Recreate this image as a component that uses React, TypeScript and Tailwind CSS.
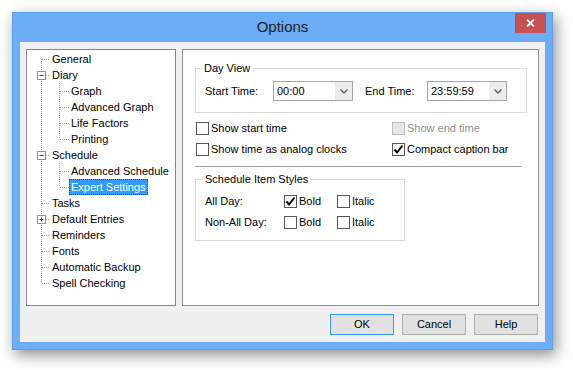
import React from "react";

type Node = {
  label: string;
  level: 0 | 1;
  box?: "-" | "+";
  lastChild?: boolean;
  selected?: boolean;
};

const tree: Node[] = [
  { label: "General", level: 0 },
  { label: "Diary", level: 0, box: "-" },
  { label: "Graph", level: 1 },
  { label: "Advanced Graph", level: 1 },
  { label: "Life Factors", level: 1 },
  { label: "Printing", level: 1, lastChild: true },
  { label: "Schedule", level: 0, box: "-" },
  { label: "Advanced Schedule", level: 1 },
  { label: "Expert Settings", level: 1, lastChild: true, selected: true },
  { label: "Tasks", level: 0 },
  { label: "Default Entries", level: 0, box: "+" },
  { label: "Reminders", level: 0 },
  { label: "Fonts", level: 0 },
  { label: "Automatic Backup", level: 0 },
  { label: "Spell Checking", level: 0 },
];

const DOT = "#a0a0a0";

function TreeLines({ node, first, last }: { node: Node; first: boolean; last: boolean }) {
  const w = node.level === 0 ? 23 : 42;
  const rootFrom = first ? 8 : 0;
  const rootTo = last ? 8.5 : 16;
  return (
    <svg width={w} height={16} className="shrink-0">
      <line x1={14.5} y1={rootFrom} x2={14.5} y2={rootTo} stroke={DOT} strokeDasharray="1 1" />
      {node.level === 0 && (
        <line x1={15} y1={8.5} x2={23} y2={8.5} stroke={DOT} strokeDasharray="1 1" />
      )}
      {node.level === 1 && (
        <>
          <line
            x1={32.5}
            y1={0}
            x2={32.5}
            y2={node.lastChild ? 8.5 : 16}
            stroke={DOT}
            strokeDasharray="1 1"
          />
          <line x1={33} y1={8.5} x2={42} y2={8.5} stroke={DOT} strokeDasharray="1 1" />
        </>
      )}
      {node.box && (
        <>
          <rect x={10.5} y={4.5} width={8} height={8} fill="#fff" stroke="#919191" />
          <line x1={12.5} y1={8.5} x2={16.5} y2={8.5} stroke="#3c3c3c" />
          {node.box === "+" && <line x1={14.5} y1={6.5} x2={14.5} y2={10.5} stroke="#3c3c3c" />}
        </>
      )}
    </svg>
  );
}

function Check({ checked, disabled, label }: { checked?: boolean; disabled?: boolean; label: string }) {
  return (
    <div className="flex h-[13px] items-center">
      <div
        className={
          disabled
            ? "flex h-[13px] w-[13px] shrink-0 items-center justify-center border border-[#bcbcbc] bg-[#e6e6e6]"
            : "flex h-[13px] w-[13px] shrink-0 items-center justify-center border border-[#555555] bg-white"
        }
      >
        {checked && (
          <svg width={11} height={11} viewBox="0 0 11 11">
            <path d="M1.5 5.5 L4 8.5 L9.5 1.5" fill="none" stroke="#000" strokeWidth={2} />
          </svg>
        )}
      </div>
      <span className={disabled ? "ml-[2px] whitespace-nowrap text-[#8d8d8d]" : "ml-[2px] whitespace-nowrap"}>
        {label}
      </span>
    </div>
  );
}

function Combo({ value }: { value: string }) {
  return (
    <div className="flex h-[20px] w-[80px] border border-[#a5a5a5] bg-white">
      <div className="flex flex-1 items-center pl-[3px]">{value}</div>
      <div className="flex w-[17px] items-center justify-center bg-[#ececec]">
        <svg width={8} height={5} viewBox="0 0 8 5">
          <path d="M0.5 0.5 L4 4 L7.5 0.5" fill="none" stroke="#606060" strokeWidth={1.4} />
        </svg>
      </div>
    </div>
  );
}

function Button({ label, primary }: { label: string; primary?: boolean }) {
  return (
    <div
      className={
        primary
          ? "flex h-[21px] w-[64px] items-center justify-center border border-[#3399ff] bg-[#e1e1e1]"
          : "flex h-[21px] w-[64px] items-center justify-center border border-[#adadad] bg-[#e1e1e1]"
      }
    >
      {label}
    </div>
  );
}

export default function App() {
  return (
    <div className="h-[370px] w-[573px] bg-white pl-[12px] pt-[12px] font-['Liberation_Sans',Arial,sans-serif] text-[11px] text-black">
      <div className="flex h-[338px] w-[541px] flex-col border border-[#5c9ee8] bg-[#6badf6] px-[7px] pb-[7px] shadow-[3px_5px_14px_rgba(0,0,0,0.45)]">
        <div className="relative flex h-[29px] items-center justify-center">
          <span className="text-[15px] text-[#222]">Options</span>
          <div className="absolute right-[-1px] top-0 flex h-[20px] w-[31px] items-center justify-center bg-[#c75050]">
            <svg width={9} height={8} viewBox="0 0 9 8">
              <path d="M1 0.5 L8 7.5 M8 0.5 L1 7.5" stroke="#fff" strokeWidth={1.8} />
            </svg>
          </div>
        </div>

        <div className="flex h-[300px] flex-col bg-[#f0f0f0] px-[6px] pt-[7px]">
          <div className="flex h-[257px] gap-[6px]">
            <div className="w-[150px] border border-[#828790] bg-white pt-[1px]">
              {tree.map((n, i) => (
                <div key={n.label} className="flex h-[16px] items-center">
                  <TreeLines node={n} first={i === 0} last={i === tree.length - 1} />
                  <span
                    className={
                      n.selected
                        ? "flex h-[16px] items-center whitespace-nowrap border border-dotted border-[#5a4a20] bg-[#3399ff] px-[1px] text-white"
                        : "whitespace-nowrap px-[2px]"
                    }
                  >
                    {n.label}
                  </span>
                </div>
              ))}
            </div>

            <div className="w-[357px] border border-[#8e8f8f] bg-white">
              <div className="relative ml-[12px] mt-[18px] h-[45px] w-[332px] border border-[#dcdcdc] pl-[9px] pt-[12px]">
                <span className="absolute left-[6px] top-[-8px] bg-white px-[2px] leading-[14px]">Day View</span>
                <div className="flex items-center">
                  <span className="w-[68px]">Start Time:</span>
                  <Combo value="00:00" />
                  <span className="ml-[12px] w-[62px]">End Time:</span>
                  <Combo value="23:59:59" />
                </div>
              </div>

              <div className="ml-[13px] mt-[9px] grid grid-cols-[196px_1fr] gap-y-[8px]">
                <Check label="Show start time" />
                <Check label="Show end time" disabled />
                <Check label="Show time as analog clocks" />
                <Check label="Compact caption bar" checked />
              </div>

              <div className="ml-[12px] mt-[10px] h-px w-[327px] bg-[#a0a0a0]" />

              <div className="relative ml-[12px] mt-[12px] h-[62px] w-[210px] border border-[#dcdcdc] pl-[9px] pt-[15px]">
                <span className="absolute left-[7px] top-[-8px] bg-white px-[2px] leading-[14px]">
                  Schedule Item Styles
                </span>
                <div className="grid grid-cols-[79px_53px_1fr] gap-y-[8px]">
                  <span className="flex h-[13px] items-center">All Day:</span>
                  <Check label="Bold" checked />
                  <Check label="Italic" />
                  <span className="flex h-[13px] items-center">Non-All Day:</span>
                  <Check label="Bold" />
                  <Check label="Italic" />
                </div>
              </div>
            </div>
          </div>

          <div className="mt-[8px] flex justify-end gap-[8px] pr-[1px]">
            <Button label="OK" primary />
            <Button label="Cancel" />
            <Button label="Help" />
          </div>
        </div>
      </div>
    </div>
  );
}
